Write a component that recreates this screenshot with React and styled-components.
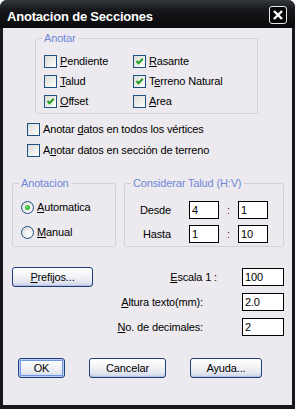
import React from 'react'
import styled, { createGlobalStyle } from 'styled-components'

const GlobalStyle = createGlobalStyle`
  * {
    box-sizing: border-box;
  }
  html, body {
    margin: 0;
    background: #ffffff;
  }
  body {
    font-family: "Liberation Sans", Arial, sans-serif;
    font-size: 11px;
    letter-spacing: -0.15px;
    color: #000;
  }
`

const Window = styled.div`
  width: 295px;
  height: 409px;
  display: flex;
  flex-direction: column;
  background: #17191d;
  border-radius: 7px 7px 0 0;
  overflow: hidden;
`

const TitleBar = styled.div`
  height: 28px;
  display: flex;
  align-items: flex-start;
  padding-left: 7px;
  background: linear-gradient(#34373c 0%, #16181b 35%, #08090a 100%);
`

const TitleText = styled.span`
  margin-top: 9px;
  font-family: "Liberation Sans", Arial, sans-serif;
  font-weight: bold;
  font-size: 13px;
  line-height: 15px;
  color: #ffffff;
  letter-spacing: -0.2px;
`

const CloseButton = styled.div`
  width: 18px;
  height: 18px;
  margin: 6px 8px 0 auto;
  border: 1px solid #e8e8e8;
  border-radius: 3px;
  background: #050505;
  display: flex;
  align-items: center;
  justify-content: center;
`

const Body = styled.div`
  flex: 1;
  margin: 0 3px 4px 3px;
  background: #eceaee;
  display: flex;
  flex-direction: column;
`

const Group = styled.fieldset`
  margin: ${p => p.$margin || '0'};
  padding: ${p => p.$pad};
  width: ${p => p.$w}px;
  min-width: 0;
  border: 1px solid #d4d1d4;
  border-radius: 3px;
`

const Legend = styled.legend`
  padding: 0 2px;
  margin-left: -2px;
  font-size: 11px;
  line-height: 13px;
  color: #6f87d8;
`

const CheckGrid = styled.div`
  display: grid;
  grid-template-columns: 89px auto;
  grid-auto-rows: 20px;
`

const Option = styled.label`
  display: flex;
  align-items: center;
  gap: 3px;
  height: ${p => p.$h || 20}px;
  margin-left: ${p => p.$indent || 0}px;
  line-height: 13px;
  white-space: nowrap;
`

const Box = styled.span`
  width: 13px;
  height: 13px;
  flex: none;
  border: 1px solid #1c5180;
  background: linear-gradient(135deg, #dcdcd7 0%, #f4f4f0 70%, #ffffff 100%);
  display: flex;
  align-items: center;
  justify-content: center;
`

const Radio = styled.span`
  width: 13px;
  height: 13px;
  flex: none;
  border: 1px solid #1c5180;
  border-radius: 50%;
  background: radial-gradient(circle at 65% 65%, #ffffff 0%, #e8e8e4 60%, #d6d6d0 100%);
  display: flex;
  align-items: center;
  justify-content: center;
`

const Dot = styled.span`
  width: 5px;
  height: 5px;
  border-radius: 50%;
  background: radial-gradient(circle at 40% 40%, #6ee06e 0%, #21a121 80%);
`

const Key = styled.u`
  text-decoration: underline;
  text-underline-offset: 1px;
`

const Outside = styled.div`
  margin-top: 5px;
  display: flex;
  flex-direction: column;
`

const GroupRow = styled.div`
  margin: 16px 0 0 9px;
  display: flex;
  gap: 8px;
`

const TaludRow = styled.div`
  display: flex;
  align-items: center;
  height: 24px;
`

const TaludLabel = styled.span`
  width: 38px;
  text-align: right;
  margin-right: 18px;
`

const Field = styled.div`
  width: ${p => p.$w}px;
  height: 18px;
  border: 1px solid #000;
  background: #ffffff;
  padding-left: 2px;
  line-height: 16px;
  color: #000;
`

const Colon = styled.span`
  width: 19px;
  text-align: center;
  color: #800080;
`

const Lower = styled.div`
  margin-top: 20px;
  display: flex;
  align-items: flex-start;
`

const Button = styled.button`
  width: ${p => p.$w}px;
  height: 20px;
  padding: 0;
  font-family: "Liberation Sans", Arial, sans-serif;
  font-size: 11px;
  letter-spacing: -0.15px;
  color: #000;
  border: 1px solid #1f3f7a;
  border-radius: 3px;
  background: linear-gradient(#ffffff 0%, #f6f6f9 35%, #e6e8f0 75%, #c9d2ea 100%);
  box-shadow: ${p => p.$default
    ? 'inset 0 0 0 1px #b9cdf4, inset 0 0 0 2px #6d95e4'
    : 'inset 0 -1px 0 #b4c0e0'};
`

const FormGrid = styled.div`
  margin: 1px 8px 0 auto;
  display: grid;
  grid-template-columns: auto 42px;
  row-gap: 7px;
  align-items: center;
`

const FormLabel = styled.span`
  justify-self: end;
  padding-right: ${p => p.$gap}px;
  white-space: nowrap;
`

const ButtonBar = styled.div`
  margin: 22px 0 0 15px;
  display: flex;
  gap: 24px;
`

function Check({ checked }) {
  return (
    <Box>
      {checked && (
        <svg width='9' height='9' viewBox='0 0 9 9'>
          <path d='M1.5 4 L3.5 6.3 L7.8 1.8' fill='none' stroke='#21a121' strokeWidth='2' />
        </svg>
      )}
    </Box>
  )
}

export default function App() {
  return (
    <Window>
      <GlobalStyle />
      <TitleBar>
        <TitleText>Anotacion de Secciones</TitleText>
        <CloseButton>
          <svg width='12' height='12' viewBox='0 0 12 12'>
            <path d='M2 2 L10 10 M10 2 L2 10' stroke='#ffffff' strokeWidth='2.4' />
          </svg>
        </CloseButton>
      </TitleBar>
      <Body>
        <Group $margin='4px 0 0 32px' $pad='6px 0 2px 8px' $w={223}>
          <Legend>Anotar</Legend>
          <CheckGrid>
            <Option><Check /><span><Key>P</Key>endiente</span></Option>
            <Option><Check checked /><span><Key>R</Key>asante</span></Option>
            <Option><Check /><span><Key>T</Key>alud</span></Option>
            <Option><Check checked /><span>T<Key>e</Key>rreno Natural</span></Option>
            <Option><Check checked /><span><Key>O</Key>ffset</span></Option>
            <Option><Check /><span><Key>A</Key>rea</span></Option>
          </CheckGrid>
        </Group>

        <Outside>
          <Option $h={21} $indent={24}>
            <Check /><span>Anotar <Key>d</Key>atos en todos los vértices</span>
          </Option>
          <Option $h={21} $indent={24}>
            <Check /><span>A<Key>n</Key>otar datos en sección de terreno</span>
          </Option>
        </Outside>

        <GroupRow>
          <Group $pad='5px 0 1px 8px' $w={104}>
            <Legend>Anotacion</Legend>
            <Option $h={25}>
              <Radio><Dot /></Radio><span><Key>A</Key>utomatica</span>
            </Option>
            <Option $h={25}>
              <Radio /><span><Key>M</Key>anual</span>
            </Option>
          </Group>
          <Group $pad='8px 0 0 8px' $w={160}>
            <Legend>Considerar Talud (H:V)</Legend>
            <TaludRow>
              <TaludLabel>Desde</TaludLabel>
              <Field $w={30}>4</Field>
              <Colon>:</Colon>
              <Field $w={30}>1</Field>
            </TaludRow>
            <TaludRow>
              <TaludLabel>Hasta</TaludLabel>
              <Field $w={30}>1</Field>
              <Colon>:</Colon>
              <Field $w={30}>10</Field>
            </TaludRow>
          </Group>
        </GroupRow>

        <Lower>
          <Button $w={81} style={{ marginLeft: 9 }}><Key>P</Key>refijos...</Button>
          <FormGrid>
            <FormLabel $gap={25}><Key>E</Key>scala 1 :</FormLabel>
            <Field $w={42}>100</Field>
            <FormLabel $gap={39}><Key>A</Key>ltura texto(mm):</FormLabel>
            <Field $w={42}>2.0</Field>
            <FormLabel $gap={39}><Key>N</Key>o. de decimales:</FormLabel>
            <Field $w={42}>2</Field>
          </FormGrid>
        </Lower>

        <ButtonBar>
          <Button $w={47} $default>OK</Button>
          <Button $w={77}>Cancelar</Button>
          <Button $w={72}>Ayuda...</Button>
        </ButtonBar>
      </Body>
    </Window>
  )
}
